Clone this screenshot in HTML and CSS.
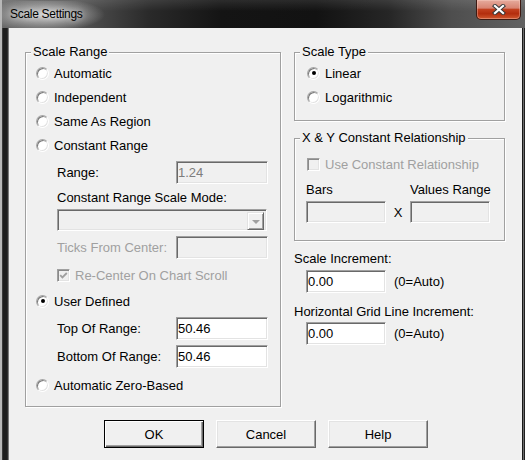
FILE: index.html
```html
<!DOCTYPE html>
<html>
<head>
<meta charset="utf-8">
<title>Scale Settings</title>
<link rel="stylesheet" href="styles.css">
</head>
<body>
<div class="window">
  <div class="titlebar">
    <span class="title">Scale Settings</span>
    <div class="close">
      <svg width="14" height="11" viewBox="0 0 14 11"><path d="M3 2L11 9M11 2L3 9" stroke="#3a3a3a" stroke-width="4.2" stroke-linecap="square"/><path d="M3 2L11 9M11 2L3 9" stroke="#fff" stroke-width="2.2" stroke-linecap="square"/></svg>
    </div>
  </div>
  <div class="frame">
    <div class="client">
      <div class="columns">
        <div class="group g-range">
          <div class="legend">Scale Range</div>
          <div class="gbody range-body">
            <div class="row opt h24"><span class="radio"></span>Automatic</div>
            <div class="row opt h24"><span class="radio"></span>Independent</div>
            <div class="row opt h24"><span class="radio"></span>Same As Region</div>
            <div class="row opt h24"><span class="radio"></span>Constant Range</div>
            <div class="row sub h30"><span class="lbl">Range:</span><input class="tb off ro" value="1.24" readonly></div>
            <div class="row sub h20">Constant Range Scale Mode:</div>
            <div class="row sub h26"><div class="combo"><span class="drop"><span class="tri"></span></span></div></div>
            <div class="row sub h29"><span class="lbl dim">Ticks From Center:</span><input class="tb off" disabled></div>
            <div class="row sub h27"><span class="check"><svg width="9" height="9" viewBox="0 0 9 9"><path d="M1.2 4.2L3.4 6.4L7.8 2" fill="none" stroke="#a0a0a0" stroke-width="1.8"/></svg></span><span class="dim">Re-Center On Chart Scroll</span></div>
            <div class="row opt h24"><span class="radio on"></span>User Defined</div>
            <div class="row sub h30"><span class="lbl">Top Of Range:</span><input class="tb" value="50.46"></div>
            <div class="row sub h26"><span class="lbl">Bottom Of Range:</span><input class="tb" value="50.46"></div>
            <div class="row opt h32"><span class="radio"></span>Automatic Zero-Based</div>
          </div>
        </div>
        <div class="rightcol">
          <div class="group g-type">
            <div class="legend">Scale Type</div>
            <div class="gbody type-body">
              <div class="row opt h24"><span class="radio on"></span>Linear</div>
              <div class="row opt h24"><span class="radio"></span>Logarithmic</div>
            </div>
          </div>
          <div class="group g-xy">
            <div class="legend">X &amp; Y Constant Relationship</div>
            <div class="gbody xy-body">
              <div class="row chk h25"><span class="check"></span><span class="dim">Use Constant Relationship</span></div>
              <div class="row pair h24"><span class="pl">Bars</span><span>Values Range</span></div>
              <div class="row pair h22"><input class="tb sm off" disabled><span class="x">X</span><input class="tb sm off" disabled></div>
            </div>
          </div>
          <div class="inc-label first">Scale Increment:</div>
          <div class="inc-row"><input class="tb sm" value="0.00"><span class="auto">(0=Auto)</span></div>
          <div class="inc-label second">Horizontal Grid Line Increment:</div>
          <div class="inc-row last"><input class="tb sm" value="0.00"><span class="auto">(0=Auto)</span></div>
        </div>
      </div>
      <div class="buttons">
        <button class="btn default">OK</button>
        <button class="btn">Cancel</button>
        <button class="btn">Help</button>
      </div>
    </div>
  </div>
</div>
</body>
</html>
```
FILE: styles.css
```css
* { box-sizing: border-box; }

body {
  margin: 0;
  font-family: "Liberation Sans", Arial, sans-serif;
  font-size: 13px;
  color: #000;
  background: #cfcfcf;
}

.window {
  width: 525px;
  height: 460px;
  display: flex;
  flex-direction: column;
  overflow: hidden;
}

/* ---------- title bar ---------- */
.titlebar {
  height: 28px;
  flex: none;
  display: flex;
  align-items: flex-start;
  background:
    linear-gradient(180deg, rgba(255,255,255,0.10), rgba(255,255,255,0) 40%),
    linear-gradient(90deg, #6a6a6a 0%, #555 14%, #2a2a2a 28%, #141414 42%, #121212 60%, #262626 74%, #4e4e4e 86%, #626262 100%);
  border-left: 2px solid #b8b8b8;
}

.title {
  margin-top: 1px;
  padding: 6px 22px 6px 8px;
  font-size: 12px;
  letter-spacing: -0.3px;
  line-height: 15px;
  color: #000;
  background: radial-gradient(ellipse 58% 62% at 42% 50%, rgba(215,215,215,0.95) 0%, rgba(180,180,180,0.6) 55%, rgba(140,140,140,0) 100%);
  text-shadow: 0 0 6px rgba(255,255,255,0.8);
}

.close {
  margin-left: auto;
  margin-right: 4px;
  width: 45px;
  height: 20px;
  border: 1px solid #3e1a12;
  border-top: none;
  border-radius: 0 0 5px 5px;
  background: linear-gradient(180deg, #e6ab9d 0%, #d88472 42%, #c2401f 50%, #b32d0d 72%, #d0582f 100%);
  box-shadow: inset 0 0 0 1px rgba(255,220,210,0.35);
  display: flex;
  align-items: center;
  justify-content: center;
}

/* ---------- frame & client ---------- */
.frame {
  flex: 1;
  padding: 0 3px 0 9px;
  background:
    linear-gradient(90deg, #b8b8b8 0 2px, #3a3a3a 2px 3px, #1e1e1e 3px 7px, #2e2e2e 7px 8px, #7a7a7a 8px 9px, transparent 9px),
    linear-gradient(270deg, #202020 0 1px, #6a6a6a 1px 2px, #1a1a1a 2px 3px, transparent 3px);
  background-color: #1e1e1e;
}

.client {
  height: 100%;
  background: #f0f0f0;
  padding: 24px 0 0 16px;
}

.columns {
  display: flex;
  gap: 13px;
  align-items: flex-start;
}

/* ---------- group boxes ---------- */
.group {
  border: 1px solid #a0a0a0;
  box-shadow: 1px 1px 0 #fff, inset 1px 1px 0 #fff;
}

.legend {
  width: max-content;
  margin: -8px 0 0 5px;
  padding: 0 2px;
  line-height: 14px;
  background: #f0f0f0;
}

.g-range { width: 256px; }
.range-body { padding: 2px 0 5px; }

.rightcol { width: 211px; }

.type-body { padding: 2px 0 11px; }
.g-xy { margin-top: 17px; }
.xy-body { padding: 7px 0 17px; }

/* ---------- rows ---------- */
.row { display: flex; align-items: center; }
.h20 { height: 20px; }
.h22 { height: 22px; }
.h24 { height: 24px; }
.h25 { height: 25px; }
.h26 { height: 26px; }
.h27 { height: 27px; }
.h29 { height: 29px; }
.h30 { height: 30px; }
.h32 { height: 32px; }

.opt { padding-left: 10px; }
.type-body .opt { padding-left: 12px; }
.sub { padding-left: 31px; }
.chk { padding-left: 12px; }
.pair { padding-left: 11px; }

.lbl { width: 119px; flex: none; }
.dim { color: #a0a0a0; }

.pl { width: 104px; flex: none; }
.x { width: 24px; text-align: center; }

/* ---------- controls ---------- */
.radio {
  position: relative;
  flex: none;
  width: 13px;
  height: 13px;
  margin-right: 5px;
  border-radius: 50%;
  border: 1px solid;
  border-color: #a6a6a6 #fff #fff #a6a6a6;
  background: #fff;
  box-shadow: inset 1px 1px 0 #7a7a7a, inset -1px -1px 0 #e3e3e3;
}
.radio.on::after {
  content: "";
  position: absolute;
  left: calc(50% - 2px);
  top: calc(50% - 2px);
  width: 4px;
  height: 4px;
  border-radius: 50%;
  background: #000;
}

.check {
  flex: none;
  width: 13px;
  height: 13px;
  margin-right: 5px;
  border: 1px solid;
  border-color: #a0a0a0 #fff #fff #a0a0a0;
  box-shadow: inset 1px 1px 0 #8a8a8a, inset -1px -1px 0 #e3e3e3;
  background: #f0f0f0;
  display: flex;
  align-items: center;
  justify-content: center;
}

.tb {
  width: 92px;
  height: 23px;
  margin: 0;
  padding: 0 1px;
  font-family: "Liberation Sans", Arial, sans-serif;
  font-size: 13px;
  color: #000;
  background: #fff;
  border: 1px solid;
  border-color: #a0a0a0 #fff #fff #a0a0a0;
  box-shadow: inset 1px 1px 0 #696969, inset -1px -1px 0 #e3e3e3;
  outline: none;
}
.tb.sm { width: 80px; }
.tb.off { background: #f0f0f0; }
.tb.ro { color: #7d7d7d; }
.pair .tb { height: 22px; }

.combo {
  width: 210px;
  height: 22px;
  padding: 2px;
  display: flex;
  justify-content: flex-end;
  background: #f0f0f0;
  border: 1px solid;
  border-color: #a0a0a0 #fff #fff #a0a0a0;
  box-shadow: inset 1px 1px 0 #696969, inset -1px -1px 0 #e3e3e3;
}
.drop {
  width: 17px;
  height: 18px;
  display: flex;
  align-items: center;
  justify-content: center;
  background: #f0f0f0;
  border: 1px solid;
  border-color: #e3e3e3 #696969 #696969 #e3e3e3;
  box-shadow: inset 1px 1px 0 #fff, inset -1px -1px 0 #a0a0a0;
}
.tri {
  width: 0;
  height: 0;
  border-left: 4px solid transparent;
  border-right: 4px solid transparent;
  border-top: 4px solid #a0a0a0;
  margin-top: 1px;
}

/* ---------- increments ---------- */
.inc-label { line-height: 15px; }
.inc-label.first { margin-top: 10px; }
.inc-label.second { margin-top: 11px; }
.inc-row {
  display: flex;
  align-items: center;
  padding-left: 12px;
  margin-top: 4px;
}
.inc-row.last { margin-top: 3px; }
.auto { margin-left: 8px; }

/* ---------- buttons ---------- */
.buttons {
  display: flex;
  gap: 12px;
  margin-top: 13px;
  padding-left: 79px;
}
.btn {
  width: 100px;
  height: 28px;
  margin: 0;
  padding: 0;
  font-family: "Liberation Sans", Arial, sans-serif;
  font-size: 13px;
  color: #000;
  background: #f0f0f0;
  border: 1px solid;
  border-color: #fff #696969 #696969 #fff;
  box-shadow: inset -1px -1px 0 #a0a0a0, inset 1px 1px 0 #e3e3e3;
}
.btn.default {
  border-color: #000;
  box-shadow: inset 1px 1px 0 #fff, inset -1px -1px 0 #696969, inset -2px -2px 0 #a0a0a0;
}
```
